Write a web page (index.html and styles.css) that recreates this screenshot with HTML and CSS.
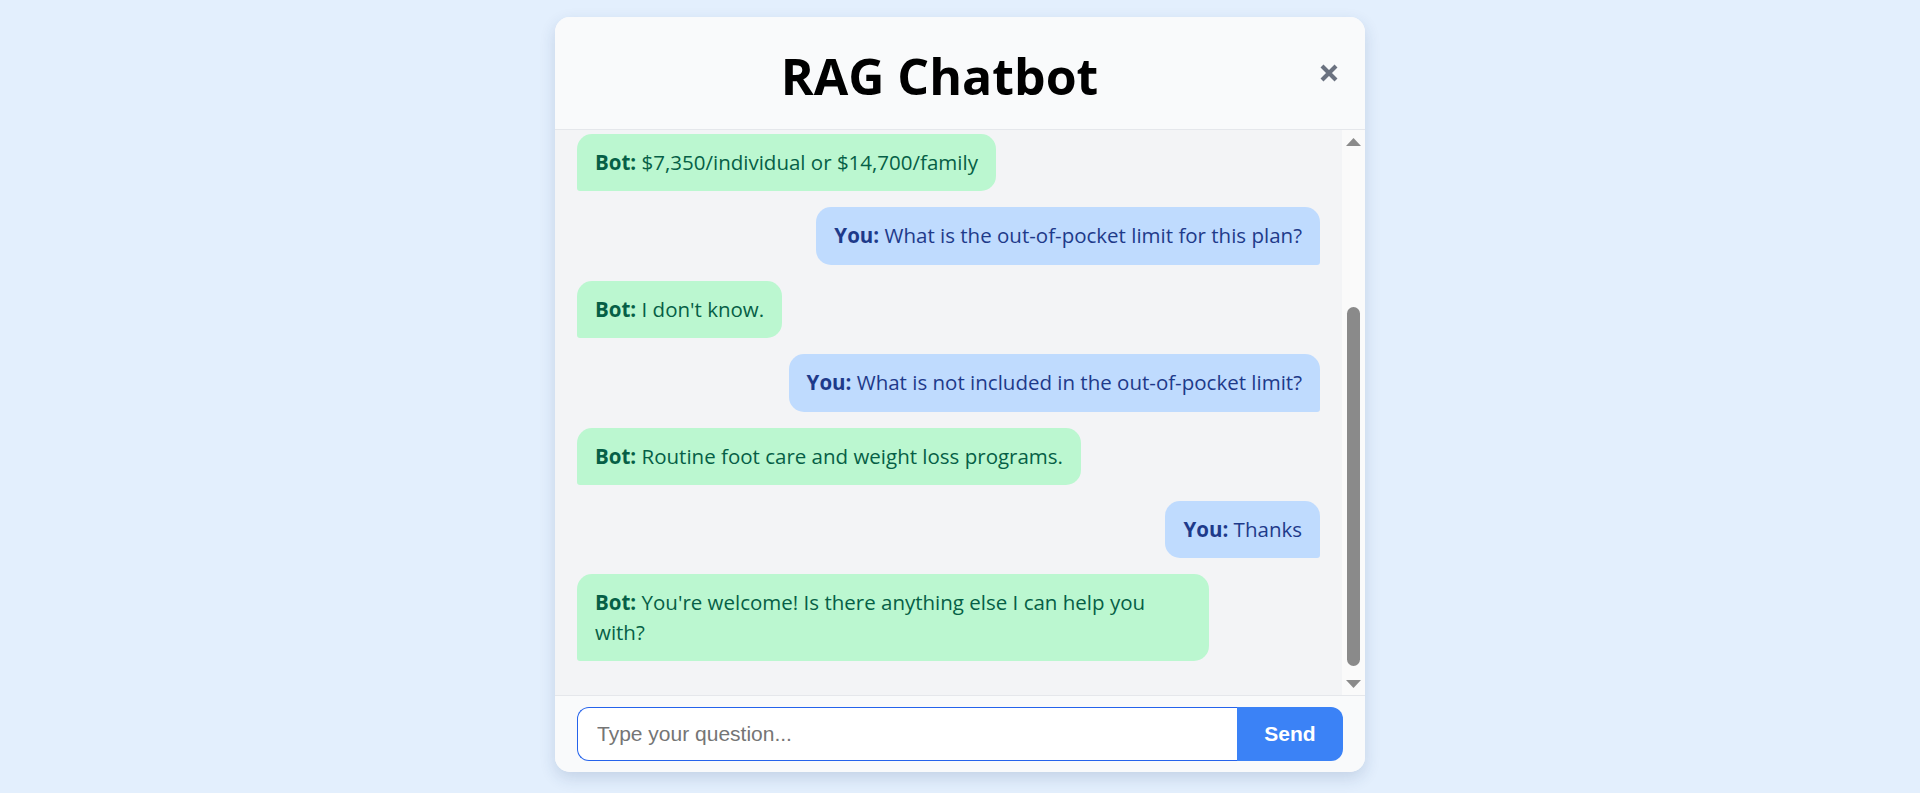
FILE: index.html
```html
<!DOCTYPE html>
<html lang="en">
<head>
<meta charset="utf-8">
<title>RAG Chatbot</title>
<link rel="stylesheet" href="styles.css">
</head>
<body>
<div class="chat-window">
  <header class="chat-header">
    <h1 class="chat-title">RAG Chatbot</h1>
    <button class="close-btn" aria-label="Close">
      <svg width="18" height="18" viewBox="0 0 18 18"><path d="M2 2 L16 16 M16 2 L2 16" stroke="#6b7280" stroke-width="4.2" stroke-linecap="butt"/></svg>
    </button>
  </header>
  <div class="messages-wrap">
    <div class="messages">
      <div class="row bot"><div class="bubble"><b>Bot:</b> $7,350/individual or $14,700/family</div></div>
      <div class="row user"><div class="bubble"><b>You:</b> What is the out-of-pocket limit for this plan?</div></div>
      <div class="row bot"><div class="bubble"><b>Bot:</b> I don't know.</div></div>
      <div class="row user"><div class="bubble"><b>You:</b> What is not included in the out-of-pocket limit?</div></div>
      <div class="row bot"><div class="bubble"><b>Bot:</b> Routine foot care and weight loss programs.</div></div>
      <div class="row user"><div class="bubble"><b>You:</b> Thanks</div></div>
      <div class="row bot"><div class="bubble"><b>Bot:</b> You're welcome! Is there anything else I can help you with?</div></div>
    </div>
    <div class="scrollbar" aria-hidden="true">
      <div class="sb-btn">
        <svg width="15" height="8" viewBox="0 0 15 8"><polygon points="7.5,0 15,8 0,8" fill="#8a8a8a"/></svg>
      </div>
      <div class="sb-track">
        <div class="sb-thumb" style="height: 359px"></div>
      </div>
      <div class="sb-btn">
        <svg width="15" height="8" viewBox="0 0 15 8"><polygon points="0,0 15,0 7.5,8" fill="#8a8a8a"/></svg>
      </div>
    </div>
  </div>
  <form class="composer" onsubmit="return false">
    <input class="question" type="text" placeholder="Type your question..." autofocus>
    <button class="send-btn" type="submit">Send</button>
  </form>
</div>
</body>
</html>
```

FILE: styles.css
```css
html, body {
  margin: 0;
  padding: 0;
  height: 100%;
}
body {
  background: #e3effd;
  font-family: "Open Sans", "Noto Sans", sans-serif;
  overflow: hidden;
}
.chat-window {
  width: 810px;
  height: 755px;
  margin: 17px auto 0;
  background: #f9fafb;
  border-radius: 15px;
  box-shadow: 0 6px 16px rgba(30, 60, 110, 0.16);
  display: flex;
  flex-direction: column;
  overflow: hidden;
}
.chat-header {
  height: 112px;
  flex: none;
  display: flex;
  align-items: center;
  gap: 18px;
  padding: 0 27px 0 22px;
  border-bottom: 1px solid #e5e7eb;
  background: #f9fafb;
}
.chat-title {
  flex: 1;
  margin: 0;
  padding-top: 6px;
  text-align: center;
  font-size: 50px;
  font-weight: 700;
  color: #000;
  line-height: 60px;
}
.close-btn {
  width: 18px;
  height: 18px;
  padding: 0;
  border: 0;
  background: none;
  display: flex;
  cursor: pointer;
}
.messages-wrap {
  flex: 1;
  min-height: 0;
  display: flex;
  background: #f3f4f6;
}
.messages {
  flex: 1;
  min-width: 0;
  overflow: hidden;
  display: flex;
  flex-direction: column;
  gap: 16px;
  padding: 4px 22px 32px;
}
.row {
  display: flex;
}
.row.user {
  justify-content: flex-end;
}
.row.bot {
  justify-content: flex-start;
}
.bubble {
  max-width: 85%;
  box-sizing: border-box;
  font-size: 20.5px;
  line-height: 29.4px;
  padding: 14px 18px;
}
.bubble b {
  font-weight: 700;
}
.bot .bubble {
  background: #bbf7d0;
  color: #065f46;
  border-radius: 15px 15px 15px 3px;
}
.user .bubble {
  background: #bfdbfe;
  color: #1e3a8a;
  border-radius: 15px 15px 3px 15px;
}
.scrollbar {
  width: 23px;
  flex: none;
  display: flex;
  flex-direction: column;
  background: #fafafa;
}
.sb-btn {
  height: 23px;
  flex: none;
  display: flex;
  align-items: center;
  justify-content: center;
}
.sb-track {
  flex: 1;
  display: flex;
  flex-direction: column;
  justify-content: flex-end;
  padding: 0 5px 6px;
}
.sb-thumb {
  background: #8a8a8a;
  border-radius: 7px;
}
.composer {
  flex: none;
  height: 77px;
  box-sizing: border-box;
  border-top: 1px solid #e5e7eb;
  background: #f9fafb;
  padding: 11px 22px 0 22px;
  margin: 0;
  display: flex;
  align-items: flex-start;
}
.question {
  flex: 1;
  height: 54px;
  box-sizing: border-box;
  border: 1px solid #2563eb;
  border-right: 0;
  border-radius: 12px 0 0 12px;
  padding: 0 18px 0 19px;
  font-family: "Liberation Sans", Arial, sans-serif;
  font-size: 21px;
  color: #111;
  background: #fff;
  outline: none;
}
.question::placeholder {
  color: #757575;
}
.send-btn {
  width: 106px;
  height: 54px;
  border: 0;
  border-radius: 0 12px 12px 0;
  background: #3b82f6;
  color: #fff;
  font-family: "Liberation Sans", Arial, sans-serif;
  font-size: 21px;
  font-weight: 700;
  cursor: pointer;
}
```
